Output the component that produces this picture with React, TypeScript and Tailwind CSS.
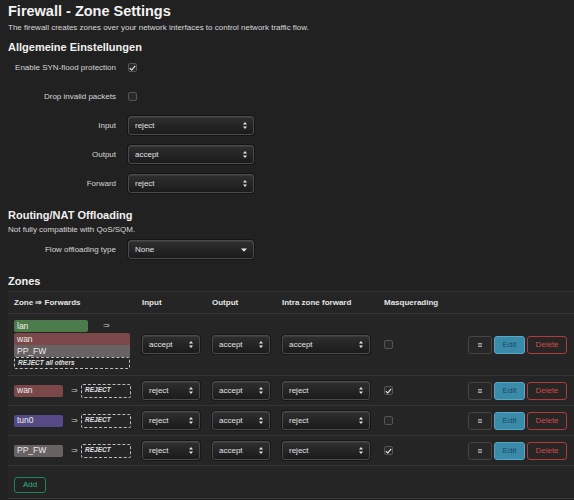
import React from "react";

// Small building blocks for the dark LuCI-style firewall page.

function UpDown() {
  return (
    <svg width="4" height="7" viewBox="0 0 4 7" aria-hidden>
      <path d="M2 0 L4 2.6 L0 2.6 Z M2 7 L4 4.4 L0 4.4 Z" fill="#e6e6e6" />
    </svg>
  );
}

function Caret() {
  return (
    <svg width="6" height="4" viewBox="0 0 6 4" aria-hidden>
      <path d="M0 0.5 L6 0.5 L3 3.8 Z" fill="#e6e6e6" />
    </svg>
  );
}

function Select({
  value,
  className = "",
  down = false,
}: {
  value: string;
  className?: string;
  down?: boolean;
}) {
  return (
    <div
      className={`flex h-[19px] items-center justify-between rounded-[3px] border border-[#4a4a4a] bg-gradient-to-b from-[#2f2f2f] to-[#1b1b1b] pl-[6px] pr-[6px] text-[8px] text-[#e2e2e2] shadow-[inset_0_1px_0_rgba(255,255,255,0.07),0_0_0_1px_rgba(0,0,0,0.35)] ${className}`}
    >
      <span>{value}</span>
      {down ? <Caret /> : <UpDown />}
    </div>
  );
}

function Checkbox({ checked }: { checked?: boolean }) {
  return (
    <span className="grid h-[9px] w-[9px] place-items-center rounded-[2px] border border-[#555] bg-[#2a2a2a]">
      {checked && (
        <svg width="7" height="6" viewBox="0 0 7 6" aria-hidden>
          <path d="M0.8 3.2 L2.7 5 L6.2 0.9" fill="none" stroke="#f0f0f0" strokeWidth="1.1" />
        </svg>
      )}
    </span>
  );
}

function FormRow({ label, children }: { label: string; children: React.ReactNode }) {
  return (
    <div className="flex h-[29px] items-center gap-[12px]">
      <div className="w-[108px] text-right text-[8px] text-[#d6d6d6]">{label}</div>
      {children}
    </div>
  );
}

const ZONE_COLORS: Record<string, string> = {
  lan: "bg-[#4c7c4c]",
  wan: "bg-[#7a4848]",
  tun0: "bg-[#564a86]",
  PP_FW: "bg-[#696262]",
};

function Badge({ name, className = "" }: { name: string; className?: string }) {
  return (
    <div
      className={`flex h-[12px] items-center rounded-[2px] px-[3px] text-[8.5px] leading-none text-[#ececec] ${ZONE_COLORS[name]} ${className}`}
    >
      {name}
    </div>
  );
}

function RejectBox({ text, className = "" }: { text: React.ReactNode; className?: string }) {
  return (
    <div
      className={`flex items-center rounded-[2px] border border-dashed border-[#bdbdbd] px-[3px] text-[6.5px] font-bold italic leading-none text-[#e0e0e0] ${className}`}
    >
      {text}
    </div>
  );
}

function Actions() {
  return (
    <div className="flex items-center gap-[2px] pr-[7px]">
      <button className="grid h-[18px] w-[24px] place-items-center rounded-[3px] border border-[#454545] bg-[#272727]">
        <svg width="4" height="4" viewBox="0 0 4 4" aria-hidden>
          <rect x="0" y="0" width="4" height="1" fill="#a0a0a0" />
          <rect x="0" y="1.5" width="4" height="1" fill="#a0a0a0" />
          <rect x="0" y="3" width="4" height="1" fill="#a0a0a0" />
        </svg>
      </button>
      <button className="h-[18px] w-[31px] rounded-[3px] border border-[#59a6c4] bg-[#3a8aa9] text-[8px] text-[#1b4c62]">
        Edit
      </button>
      <button className="h-[18px] w-[40px] rounded-[3px] border border-[#b13a3a] bg-[#262626] text-[8px] text-[#d24848]">
        Delete
      </button>
    </div>
  );
}

const GRID = "grid grid-cols-[128px_70px_70px_102px_1fr_auto] items-center";

type Zone = {
  name: string;
  input: string;
  output: string;
  intra: string;
  masq: boolean;
};

const ZONES: Zone[] = [
  { name: "wan", input: "reject", output: "accept", intra: "reject", masq: true },
  { name: "tun0", input: "reject", output: "accept", intra: "reject", masq: false },
  { name: "PP_FW", input: "reject", output: "accept", intra: "reject", masq: true },
];

function PolicyCells({ z }: { z: Zone }) {
  return (
    <>
      <div className="pl-[6px]">
        <Select value={z.input} className="w-[58px]" />
      </div>
      <div className="pl-[6px]">
        <Select value={z.output} className="w-[58px]" />
      </div>
      <div className="pl-[6px]">
        <Select value={z.intra} className="w-[88px]" />
      </div>
      <div className="pl-[6px]">
        <Checkbox checked={z.masq} />
      </div>
      <Actions />
    </>
  );
}

export default function App() {
  return (
    <div className="h-[500px] overflow-hidden bg-[#212121] pl-[8px] pt-[2px] font-['Liberation_Sans',Arial,sans-serif] text-[#e0e0e0]">
      <h2 className="text-[14.5px] font-bold leading-[18px] text-[#f2f2f2]">Firewall - Zone Settings</h2>
      <p className="mt-[3px] text-[8px] leading-[10px] text-[#d8d8d8]">
        The firewall creates zones over your network interfaces to control network traffic flow.
      </p>

      <h3 className="mt-[9px] text-[11px] font-bold leading-[11px] text-[#f0f0f0]">Allgemeine Einstellungen</h3>
      <FormRow label="Enable SYN-flood protection">
        <Checkbox checked />
      </FormRow>
      <FormRow label="Drop invalid packets">
        <Checkbox />
      </FormRow>
      <FormRow label="Input">
        <Select value="reject" className="w-[126px]" />
      </FormRow>
      <FormRow label="Output">
        <Select value="accept" className="w-[126px]" />
      </FormRow>
      <FormRow label="Forward">
        <Select value="reject" className="w-[126px]" />
      </FormRow>

      <h3 className="mt-[10px] text-[11px] font-bold leading-[14px] text-[#f0f0f0]">Routing/NAT Offloading</h3>
      <p className="mt-[3px] text-[8px] leading-[10px] text-[#d8d8d8]">Not fully compatible with QoS/SQM.</p>
      <FormRow label="Flow offloading type">
        <Select value="None" down className="w-[126px]" />
      </FormRow>

      <h3 className="mt-[10px] text-[11px] font-bold leading-[14px] text-[#f0f0f0]">Zones</h3>

      <div className="mt-[3px] border-b border-[#3a3a3a] bg-[#252525]">
        <div className={`${GRID} h-[23px] border-y border-[#343434] text-[8px] font-bold text-[#e4e4e4]`}>
          <div className="pl-[6px]">Zone ⇒ Forwards</div>
          <div className="pl-[6px]">Input</div>
          <div className="pl-[6px]">Output</div>
          <div className="pl-[6px]">Intra zone forward</div>
          <div className="pl-[6px]">Masquerading</div>
          <div />
        </div>

        {/* lan row, forwards wrap below the source badge */}
        <div className={`${GRID} h-[62px] border-b border-[#343434]`}>
          <div className="pl-[6px]">
            <div className="flex items-center">
              <Badge name="lan" className="w-[74px]" />
              <span className="ml-[15px] text-[8px] text-[#bbb]">⇒</span>
            </div>
            <div className="mt-[1px] w-[116px]">
              <Badge name="wan" className="rounded-b-none" />
              <Badge name="PP_FW" className="rounded-none" />
              <RejectBox
                className="h-[12px]"
                text={
                  <>
                    REJECT<span className="ml-[2px] font-bold">all others</span>
                  </>
                }
              />
            </div>
          </div>
          <PolicyCells z={{ name: "lan", input: "accept", output: "accept", intra: "accept", masq: false }} />
        </div>

        {ZONES.map((z) => (
          <div key={z.name} className={`${GRID} h-[30px] border-b border-[#343434]`}>
            <div className="flex items-center pl-[6px]">
              <Badge name={z.name} className="w-[49px]" />
              <span className="ml-[8px] text-[8px] text-[#bbb]">⇒</span>
              <RejectBox text="REJECT" className="ml-[3px] h-[14px] w-[50px]" />
            </div>
            <PolicyCells z={z} />
          </div>
        ))}

        <div className="flex h-[32px] items-start pl-[6px] pt-[11px]">
          <button className="h-[16px] w-[32px] rounded-[3px] border-[1.5px] border-[#1c8656] bg-[#222] text-[8px] leading-none text-[#2db57a]">
            Add
          </button>
        </div>
      </div>
    </div>
  );
}
